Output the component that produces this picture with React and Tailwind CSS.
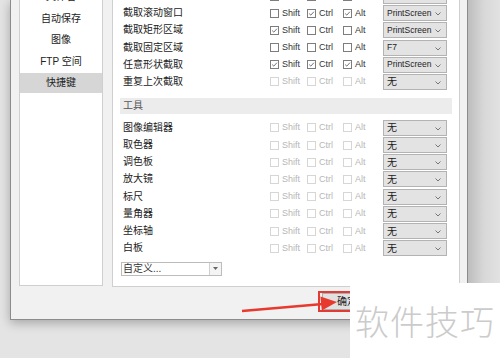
import React from 'react';

const FONT = "font-['Liberation_Sans','Noto_Sans_CJK_SC',sans-serif]";

const captureRows = [
  { label: '截取全屏', shift: false, ctrl: false, alt: false, key: 'PrintScreen' },
  { label: '截取滚动窗口', shift: false, ctrl: true, alt: true, key: 'PrintScreen' },
  { label: '截取矩形区域', shift: true, ctrl: false, alt: false, key: 'PrintScreen' },
  { label: '截取固定区域', shift: false, ctrl: false, alt: false, key: 'F7' },
  { label: '任意形状截取', shift: true, ctrl: true, alt: true, key: 'PrintScreen' },
  { label: '重复上次截取', disabled: true, key: '无' },
];

const toolRows = ['图像编辑器', '取色器', '调色板', '放大镜', '标尺', '量角器', '坐标轴', '白板'];

const sideItems = ['文件名', '自动保存', '图像', 'FTP 空间', '快捷键'];

function Check({ checked, disabled, label, width }) {
  return (
    <div className={`flex items-center ${width}`}>
      <span
        className={`flex items-center justify-center w-[9px] h-[9px] border bg-white ${
          disabled ? 'border-[#d6d6d6]' : 'border-[#7d7d7d]'
        }`}
      >
        {checked && (
          <svg width="9" height="9" viewBox="0 0 9 9">
            <path d="M1.5 4.6 L3.6 6.6 L7.6 2.2" fill="none" stroke="#333" strokeWidth="0.9" />
          </svg>
        )}
      </span>
      <span className={`ml-[3px] text-[9px] leading-none ${disabled ? 'text-[#b6b6b6]' : 'text-[#333]'}`}>
        {label}
      </span>
    </div>
  );
}

function KeySelect({ value }) {
  return (
    <div className="relative flex items-center w-[64px] h-[16px] border border-[#b3b3b3] bg-[#e3e3e3] pl-[3px]">
      <span className={value === '无' ? 'text-[10px] text-[#222]' : 'text-[8.5px] text-[#222]'}>{value}</span>
      <svg className="absolute right-[5px] top-[6px]" width="6" height="4" viewBox="0 0 6 4">
        <path d="M0.5 0.5 L3 3 L5.5 0.5" fill="none" stroke="#6a6a6a" strokeWidth="0.9" />
      </svg>
    </div>
  );
}

function Row({ label, shift, ctrl, alt, keyName, disabled }) {
  return (
    <div className="flex items-center h-[17.2px]">
      <div className="w-[150px] pl-[3px] text-[10px] text-[#222] leading-none">{label}</div>
      <Check width="w-[37px]" label="Shift" checked={shift} disabled={disabled} />
      <Check width="w-[36px]" label="Ctrl" checked={ctrl} disabled={disabled} />
      <Check width="w-[40px]" label="Alt" checked={alt} disabled={disabled} />
      <KeySelect value={keyName} />
    </div>
  );
}

export default function App() {
  return (
    <div className={`relative w-[500px] h-[358px] overflow-hidden bg-[#e4e4e4] ${FONT}`}>
      <div className="flex h-[320px]">
        <div className="w-[10px]" />
        {/* dialog */}
        <div className="w-[458px] h-[320px] border-x border-b border-[#8c8c8c] bg-[#f1f1f1] shadow-[0_3px_10px_rgba(0,0,0,0.28)]">
          <div className="flex gap-[9px] pl-[8px]">
            {/* sidebar */}
            <div className="w-[84px] h-[286px] border-x border-b border-[#cfcfcf] bg-white overflow-hidden">
              <div className="mt-[-14px]">
                {sideItems.map((s) => (
                  <div key={s} className="h-[21.5px] flex items-center">
                    <div
                      className={`w-full h-[20px] flex items-center justify-center text-[10px] text-[#222] ${
                        s === '快捷键' ? 'bg-[#d6d6d6]' : ''
                      }`}
                    >
                      {s}
                    </div>
                  </div>
                ))}
              </div>
            </div>
            {/* main panel */}
            <div className="w-[348px] h-[287px] border-x border-b border-[#cfcfcf] bg-white overflow-hidden px-[7px]">
              <div className="mt-[-12.6px]">
                {captureRows.map((r) => (
                  <Row key={r.label} {...r} keyName={r.key} />
                ))}
              </div>
              <div className="mt-[7.4px] h-[16px] bg-[#ececec] flex items-center pl-[3px] text-[10px] text-[#555]">
                工具
              </div>
              <div className="mt-[5.4px]">
                {toolRows.map((t) => (
                  <Row key={t} label={t} disabled keyName="无" />
                ))}
              </div>
              <div className="mt-[5px] ml-[1px] flex w-[101px] h-[14px] border border-[#bcbcbc] bg-white">
                <div className="flex-1 flex items-center pl-[1px] text-[10px] text-[#333] leading-none">自定义...</div>
                <div className="w-[12px] border-l border-[#d0d0d0] bg-[#f4f4f4] flex items-center justify-center">
                  <svg width="5" height="3" viewBox="0 0 5 3">
                    <path d="M0 0 L5 0 L2.5 3 Z" fill="#666" />
                  </svg>
                </div>
              </div>
            </div>
          </div>
          {/* footer buttons (right part hidden under the watermark) */}
          <div className="w-[339px] overflow-hidden">
            <div className="flex pt-[6px] pl-[311px]">
              <div className="shrink-0 w-[50px] h-[17px] border border-[#adadad] bg-[#e1e1e1] flex items-center justify-center text-[10px] text-[#222]">
                确定
              </div>
            </div>
          </div>
        </div>
        <div className="flex-1 bg-gradient-to-r from-[#bdbdbd] via-[#d8d8d8] to-[#e2e2e2]" />
      </div>

      {/* red highlight box */}
      <div className="absolute left-[318px] top-[291px] w-[45px] h-[21px] border-2 border-[#e23b33]" />

      {/* red arrow */}
      <svg className="absolute left-0 top-0" width="500" height="358" viewBox="0 0 500 358">
        <line x1="242" y1="311" x2="323" y2="304" stroke="#e8392f" strokeWidth="2.4" />
        <polygon points="337,302 321.8,310.5 320.4,296.5" fill="#e8392f" />
      </svg>

      {/* watermark */}
      <div className="absolute left-[350px] top-[283px] w-[150px] h-[75px] bg-white flex items-center pl-[5px]">
        <span className="text-[34px] leading-none text-[#cbcbcb] font-['Noto_Sans_CJK_SC',sans-serif] font-light tracking-[1px]">
          软件技巧
        </span>
      </div>
    </div>
  );
}
